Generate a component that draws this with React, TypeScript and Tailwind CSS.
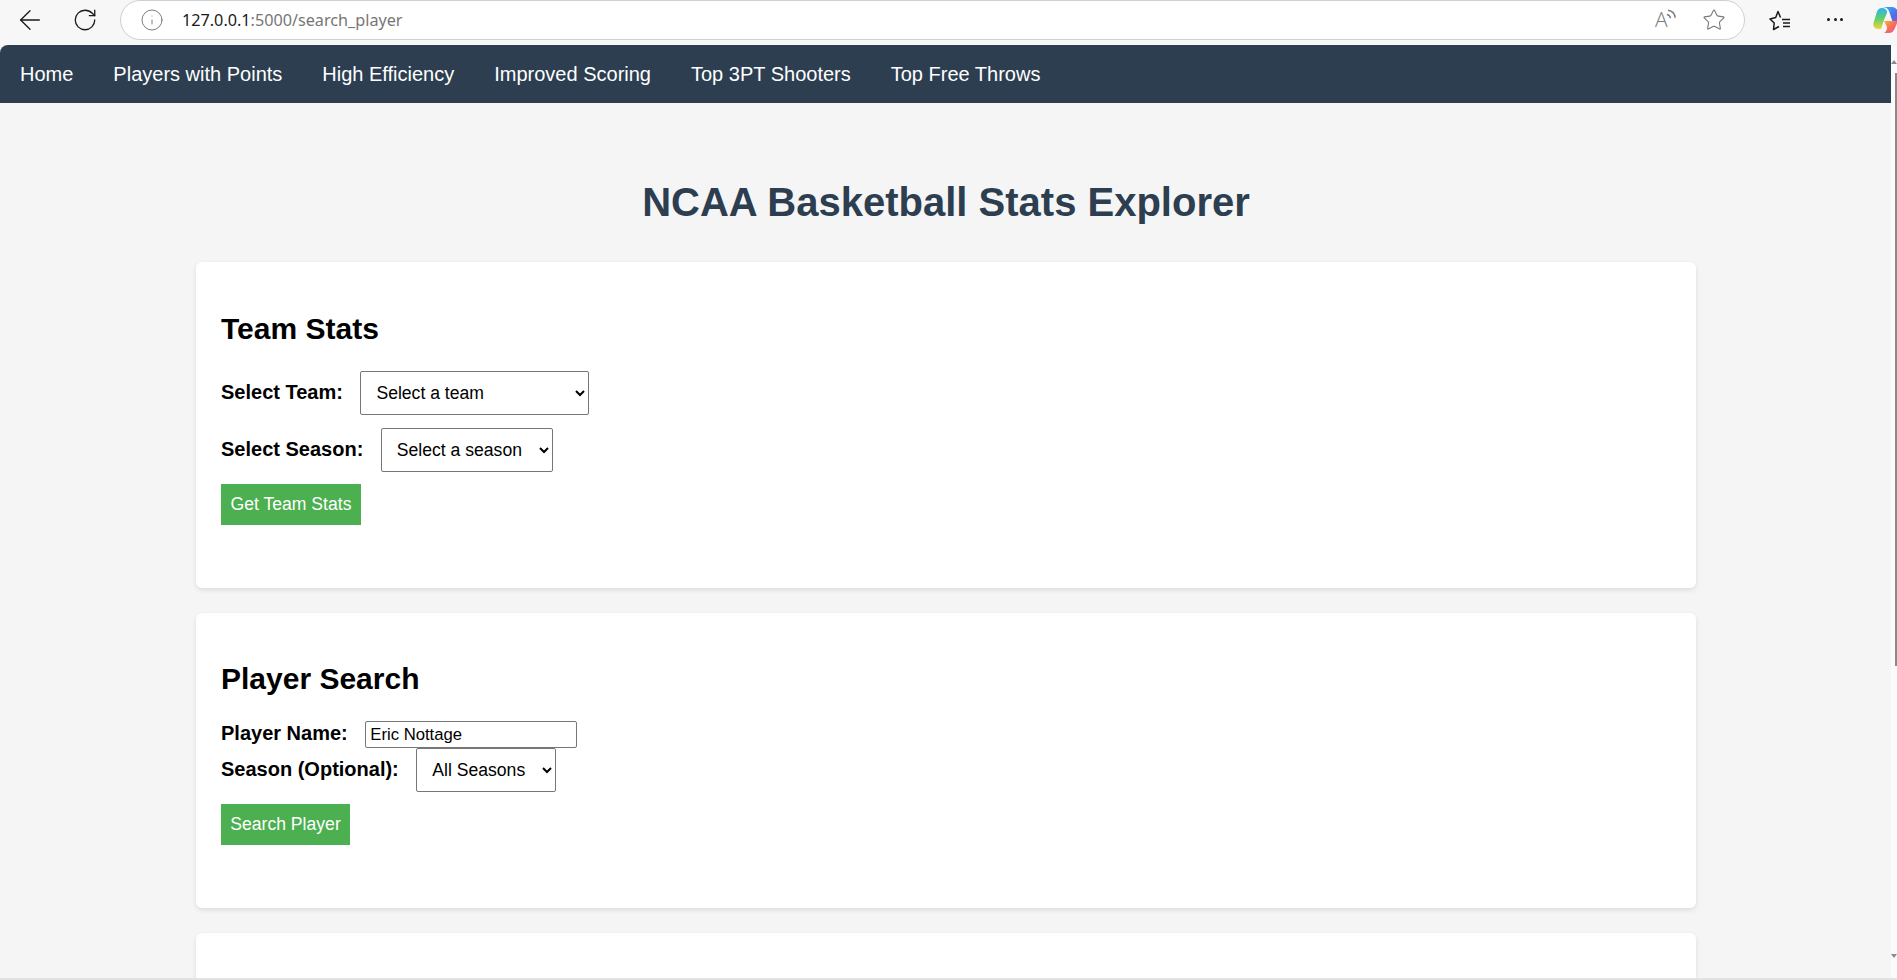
import type { ReactNode } from 'react';
import { ArrowLeft, RotateCw, Info, Star } from 'lucide-react';

const navLinks = ['Home', 'Players with Points', 'High Efficiency', 'Improved Scoring', 'Top 3PT Shooters', 'Top Free Throws'];

function ReadAloud() {
  return (
    <div className="relative w-[20px] h-[22px] text-[#7a7a7a]">
      <span className="absolute left-0 top-[-1px] text-[21px] leading-[22px] font-['Open_Sans',sans-serif] font-light">A</span>
      <svg className="absolute right-[-2px] top-0" width="11" height="12" viewBox="0 0 11 12" fill="none" stroke="currentColor" strokeWidth="1.4">
        <path d="M1 5.500c2 .3 3.200 1.700 3.400 3.800" />
        <path d="M2 1.200c4.200.6 6.800 3.300 7.200 7.600" />
      </svg>
    </div>
  );
}

function Favorites() {
  return (
    <svg width="22" height="22" viewBox="0 0 22 22" fill="none" stroke="#1a1a1a" strokeWidth="1.5" strokeLinejoin="round">
      <path d="M11.500 8.500L9 2.500 6.700 8.500 1 10l4.200 4-.7 6.500 5.500-3" />
      <path d="M13 10.500h8M14 14h7M14 17.500h7" />
    </svg>
  );
}

function CopilotLogo() {
  return (
    <svg width="28" height="26" viewBox="0 0 28 26">
      <defs>
        <linearGradient id="copilotA" x1="0" y1="0" x2="1" y2="1">
          <stop offset="0" stopColor="#35b5f0" />
          <stop offset="0.6" stopColor="#4f6bea" />
          <stop offset="1" stopColor="#b04ad8" />
        </linearGradient>
        <linearGradient id="copilotB" x1="0" y1="0" x2="1" y2="1">
          <stop offset="0" stopColor="#ffb52e" />
          <stop offset="0.5" stopColor="#f46d5b" />
          <stop offset="1" stopColor="#e84fa8" />
        </linearGradient>
        <linearGradient id="copilotC" x1="0" y1="0" x2="0" y2="1">
          <stop offset="0" stopColor="#2fb4ee" />
          <stop offset="0.5" stopColor="#5fd06a" />
          <stop offset="1" stopColor="#f7d23c" />
        </linearGradient>
      </defs>
      <path d="M9 0h10c3 0 5 2 6 5l3 11h-8L16 4c-1-2.500-4-4-7-4z" fill="url(#copilotA)" />
      <path d="M9 1C6 1 4 3 3.500 6L.5 16c-1 3 1 6 4 6h3.500l3-9 3-7c.5-3-2-5-5-5z" fill="url(#copilotC)" />
      <path d="M11 14h14l-3 7c-1 3-3 5-6.500 5H11c2-1 3-3 3-6z" fill="url(#copilotB)" />
    </svg>
  );
}

function BrowserBar() {
  return (
    <div className="h-[45px] shrink-0 flex items-start bg-[#f7f7f7]">
      <div className="w-[120px] h-[39px] shrink-0 flex items-center text-[#1a1a1a]">
        <ArrowLeft className="ml-[14px]" size={32} strokeWidth={1} />
        <RotateCw className="ml-[26px]" size={26} strokeWidth={1.2} />
      </div>
      <div className="flex-1 h-[40px] flex items-center bg-white border border-[#cfcfcf] rounded-[20px] font-['Noto_Sans',sans-serif]">
        <Info className="ml-[19px] text-[#6f6f6f]" size={24} strokeWidth={0.9} />
        <span className="ml-[18px] text-[16.2px] text-[#1a1a1a]">127.0.0.1<span className="text-[#767676]">:5000/search_player</span></span>
        <div className="ml-auto mr-[18px] flex items-center gap-[27px]">
          <ReadAloud />
          <Star className="text-[#7a7a7a]" size={24} strokeWidth={1.1} />
        </div>
      </div>
      <div className="w-[152px] h-[39px] shrink-0 flex items-center overflow-hidden">
        <div className="ml-[24px] shrink-0"><Favorites /></div>
        <div className="ml-[36px] shrink-0 flex gap-[3.500px]">
          <span className="w-[3px] h-[3px] rounded-full bg-[#1a1a1a]" />
          <span className="w-[3px] h-[3px] rounded-full bg-[#1a1a1a]" />
          <span className="w-[3px] h-[3px] rounded-full bg-[#1a1a1a]" />
        </div>
        <div className="ml-[30px] shrink-0"><CopilotLogo /></div>
      </div>
    </div>
  );
}

function Field({ label, children, className }: { label: string; children: ReactNode; className?: string }) {
  return (
    <div className={`flex items-center ${className ?? ''}`}>
      <label className="text-[20px] leading-[23px] font-bold text-black mr-[17.500px] -translate-y-px">{label}</label>
      {children}
    </div>
  );
}

function SelectBox({ label, className }: { label: string; className: string }) {
  return (
    <select defaultValue={label} className={`h-[44px] appearance-auto bg-white border border-[#767676] rounded-[2px] pl-[11px] pr-[4px] text-[17.6px] text-black ${className}`}>
      <option>{label}</option>
    </select>
  );
}

function GreenButton({ label, className }: { label: string; className: string }) {
  return (
    <button className={`h-[41px] bg-[#4caf50] text-white text-[17.6px] flex items-center justify-center ${className}`}>
      {label}
    </button>
  );
}

export default function App() {
  return (
    <div className="h-[980px] overflow-hidden flex flex-col bg-[#f7f7f7] font-['Liberation_Sans',Arial,sans-serif]">
      <BrowserBar />
      <div className="flex-1 min-h-0 flex border-b-2 border-[#e2e2e2]">
        <div className="flex-1 min-w-0 overflow-hidden bg-[#f5f5f5]">
          <nav className="h-[58px] bg-[#2c3e50] rounded-tl-[8px] flex items-center pl-[20px] gap-[40px] text-[20px] text-white">
            {navLinks.map((link) => (
              <a key={link}>{link}</a>
            ))}
          </nav>
          <div className="w-[1500px] ml-[196px]">
            <h1 className="mt-[77px] text-center text-[40px] leading-[44px] font-bold text-[#2c3e50]">NCAA Basketball Stats Explorer</h1>

            <section className="mt-[38px] h-[326px] bg-white rounded-[6px] shadow-[0_2px_5px_rgba(0,0,0,0.1)] px-[25px] pt-[50px]">
              <h2 className="text-[30px] leading-[33px] font-bold text-black">Team Stats</h2>
              <div className="mt-[26px] flex flex-col items-start">
                <Field label="Select Team:">
                  <SelectBox label="Select a team" className="w-[229px]" />
                </Field>
                <Field label="Select Season:" className="mt-[13px]">
                  <SelectBox label="Select a season" className="w-[172px]" />
                </Field>
                <GreenButton label="Get Team Stats" className="mt-[12px] w-[140px]" />
              </div>
            </section>

            <section className="mt-[25px] h-[295px] bg-white rounded-[6px] shadow-[0_2px_5px_rgba(0,0,0,0.1)] px-[25px] pt-[49px]">
              <h2 className="text-[30px] leading-[33px] font-bold text-black">Player Search</h2>
              <div className="mt-[26px] flex flex-col items-start">
                <Field label="Player Name:">
                  <input defaultValue="Eric Nottage" className="w-[212px] h-[27px] bg-white border border-[#767676] rounded-[2px] px-[4px] text-[16.7px] text-black" />
                </Field>
                <Field label="Season (Optional):">
                  <SelectBox label="All Seasons" className="w-[140px]" />
                </Field>
                <GreenButton label="Search Player" className="mt-[12px] w-[129px]" />
              </div>
            </section>

            <section className="mt-[25px] h-[200px] bg-white rounded-[6px] shadow-[0_2px_5px_rgba(0,0,0,0.1)]" />
          </div>
        </div>
        <div className="w-[6px] shrink-0 bg-[#fbfbfb] flex flex-col items-end">
          <div className="mt-[15px] w-0 h-0 border-x-[3px] border-x-transparent border-b-[4px] border-b-[#8a8a8a]" />
          <div className="mt-[9px] w-[2px] h-[593px] bg-[#8a8a8a]" />
          <div className="mt-[288px] w-0 h-0 border-x-[3px] border-x-transparent border-t-[4px] border-t-[#8a8a8a]" />
        </div>
      </div>
    </div>
  );
}
